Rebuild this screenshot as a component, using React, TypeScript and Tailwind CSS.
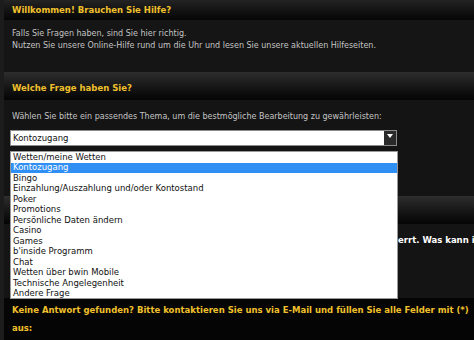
import React from "react";

const options = [
  "Wetten/meine Wetten",
  "Kontozugang",
  "Bingo",
  "Einzahlung/Auszahlung und/oder Kontostand",
  "Poker",
  "Promotions",
  "Persönliche Daten ändern",
  "Casino",
  "Games",
  "b'inside Programm",
  "Chat",
  "Wetten über bwin Mobile",
  "Technische Angelegenheit",
  "Andere Frage",
];

export default function App() {
  return (
    <div className="relative w-[474px] h-[340px] overflow-hidden bg-[#1c1c1c] font-['DejaVu_Sans',sans-serif]">
      <div className="ml-[4px] flex flex-col">
        {/* Panel 1 */}
        <div className="h-[20px] bg-gradient-to-b from-[#232323] to-[#060606] flex items-center pl-[8px]">
          <span className="text-[8.5px] font-bold text-[#f0c02c] whitespace-nowrap">Willkommen! Brauchen Sie Hilfe?</span>
        </div>
        <div className="h-[52px] bg-[#151515] pl-[8px] pt-[8px] text-[8px] leading-[12px] text-[#c4c4c4] whitespace-nowrap">
          <div>Falls Sie Fragen haben, sind Sie hier richtig.</div>
          <div>Nutzen Sie unsere Online-Hilfe rund um die Uhr und lesen Sie unsere aktuellen Hilfeseiten.</div>
        </div>
        {/* Panel 2 */}
        <div className="h-[28px] bg-gradient-to-b from-[#2e2e2e] to-[#050505] flex items-end pb-[5px] pl-[8px]">
          <span className="text-[8.5px] font-bold text-[#f0c02c] whitespace-nowrap">Welche Frage haben Sie?</span>
        </div>
        <div className="h-[96px] bg-[#141414] pl-[8px] pt-[11px] text-[8px] leading-[12px] text-[#c4c4c4] whitespace-nowrap">
          <div>Wählen Sie bitte ein passendes Thema, um die bestmögliche Bearbeitung zu gewährleisten:</div>
          <div className="mt-[7px] ml-[-2px] w-[387px] h-[16px] bg-white border border-[#8a8a8a] flex items-center justify-between">
            <span className="pl-[2px] text-[8.5px] text-[#111] font-['DejaVu_Sans',sans-serif]">Kontozugang</span>
            <span className="w-[12px] h-[14px] bg-[#2a2a2a] flex items-start justify-center pt-[3px]">
              <svg width="6" height="4" viewBox="0 0 6 4"><path d="M0 0H6L3 4Z" fill="#fff" /></svg>
            </span>
          </div>
        </div>
        {/* Panel 3 */}
        <div className="h-[28px] bg-gradient-to-b from-[#2e2e2e] to-[#050505]" />
        <div className="h-[74px] bg-[#141414] pt-[10px] text-[8.5px] font-bold text-white whitespace-nowrap flex">
          <span className="w-[394px] shrink-0 text-right">Ihr Konto ist gesp</span>
          <span>errt. Was kann ich tun?</span>
        </div>
        {/* Bottom */}
        <div className="h-[42px] bg-[#050505] pl-[8px] pt-[3px] text-[8.5px] font-bold text-[#f0c02c] leading-[18px]">
          Keine Antwort gefunden? Bitte kontaktieren Sie uns via E-Mail und füllen Sie alle Felder mit (*) aus:
        </div>
      </div>

      {/* Open dropdown list */}
      <div className="absolute left-[10px] top-[151px] w-[388px] h-[148px] bg-white border border-[#9a9a9a] flex flex-col">
        {options.map((o, i) => (
          <div
            key={o}
            className={
              "h-[10.5px] flex items-center pl-[2px] text-[8.5px] whitespace-nowrap " +
              (i === 1 ? "bg-[#2f8ff5] text-white" : "text-[#111]")
            }
          >
            {o}
          </div>
        ))}
      </div>
    </div>
  );
}
